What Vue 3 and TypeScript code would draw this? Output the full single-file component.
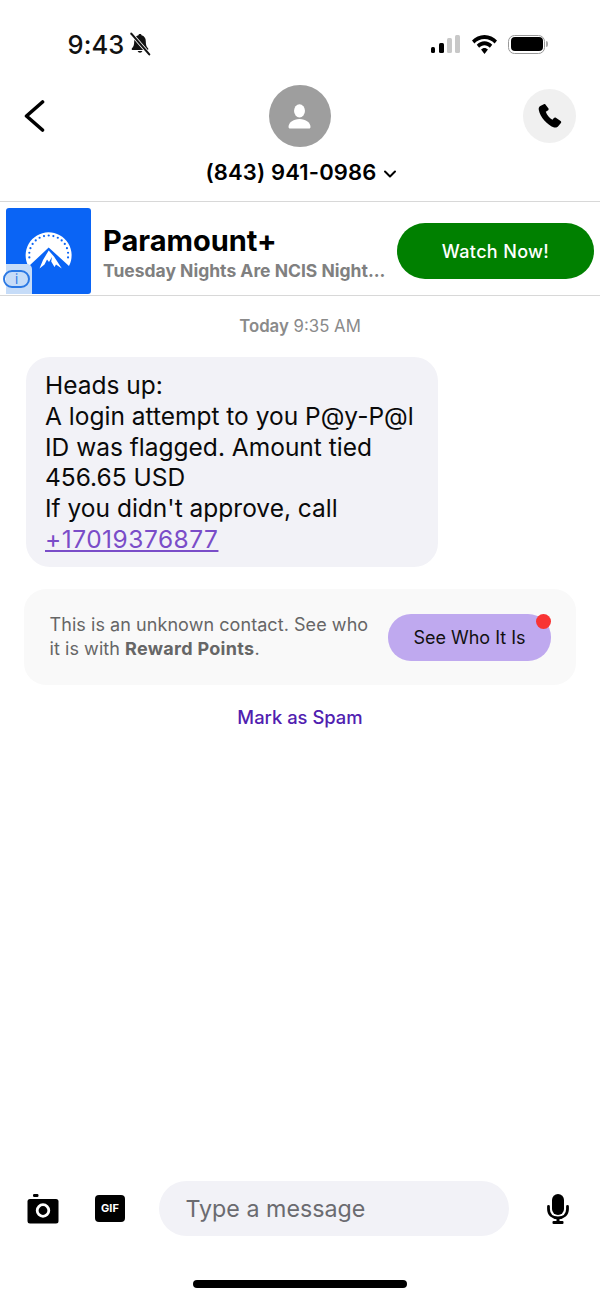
<script setup lang="ts">
const dots: { x: number; y: number }[] = [];
for (let i = 0; i <= 14; i++) {
  const a = Math.PI * (1.04 - (i / 14) * 1.08);
  dots.push({ x: 32.7 + 19.5 * Math.cos(a), y: 34 - 19.5 * Math.sin(a) });
}
const messageLines: string[] = [
  'Heads up:',
  'A login attempt to you P@y-P@l',
  'ID was flagged. Amount tied',
  '456.65 USD',
  "If you didn't approve, call",
];
</script>

<template>
  <div class="screen">
    <header class="status">
      <div class="status-left">
        <span class="time">9:43</span>
        <svg class="bell" width="24" height="24" viewBox="0 0 22 22">
          <path d="M11 1.800c-.8 0-1.300.5-1.400 1.200C7 3.600 5.700 5.800 5.700 8.400c0 3.400-.7 5.200-2.200 6.600v1.400h15V15c-1.500-1.400-2.200-3.200-2.200-6.600 0-2.600-1.300-4.800-3.900-5.400-.1-.7-.6-1.200-1.400-1.200z" fill="#111" />
          <path d="M8.800 17.500a2.300 2.300 0 0 0 4.400 0z" fill="#111" />
          <path d="M3 1.500l16.500 19" stroke="#fff" stroke-width="3.400" />
          <path d="M3 1.500l16.500 19" stroke="#111" stroke-width="1.900" stroke-linecap="round" />
        </svg>
      </div>
      <div class="status-right">
        <div class="signal">
          <i class="s1"></i><i class="s2"></i><i class="s3"></i><i class="s4"></i>
        </div>
        <svg width="25" height="19" viewBox="2 3 21 14.500" preserveAspectRatio="none">
          <path d="M12.500 3C8.400 3 4.700 4.600 2 7.200l2 2.200C6.200 7.300 9.200 6 12.500 6s6.300 1.300 8.500 3.400l2-2.200C20.300 4.600 16.600 3 12.500 3z" fill="#000" />
          <path d="M12.500 7.800c-2.500 0-4.800 1-6.500 2.600l2 2.300c1.200-1.100 2.800-1.800 4.500-1.800s3.300.7 4.500 1.800l2-2.300c-1.700-1.600-4-2.600-6.500-2.600z" fill="#000" />
          <path d="M12.500 12.900c-1.100 0-2 .4-2.900 1.200l2.900 3.400 2.900-3.400c-.9-.8-1.800-1.200-2.900-1.200z" fill="#000" />
        </svg>
        <div class="battery"><div class="battery-fill"></div></div>
        <div class="battery-cap"></div>
      </div>
    </header>

    <nav class="nav">
      <button class="back" aria-label="Back">
        <svg width="24" height="36" viewBox="0 0 24 36">
          <path d="M18.500 4L2.500 18l16 14" fill="none" stroke="#000" stroke-width="3.600" stroke-linecap="round" stroke-linejoin="round" />
        </svg>
      </button>
      <div class="contact">
        <div class="avatar">
          <svg width="23" height="25" viewBox="0 0 23 25">
            <ellipse cx="11.500" cy="6.800" rx="5.500" ry="6.600" fill="#fff" />
            <path d="M2 24.500c-1 0-1.500-.6-1.500-1.500 0-4.200 4.500-8 11-8s11 3.800 11 8c0 .9-.5 1.500-1.500 1.500z" fill="#fff" />
          </svg>
        </div>
        <div class="number">
          <span>(843) 941-0986</span>
          <svg width="14" height="10" viewBox="0 0 14 10">
            <path d="M2 2.500l5 5 5-5" fill="none" stroke="#000" stroke-width="2" stroke-linecap="round" stroke-linejoin="round" />
          </svg>
        </div>
      </div>
      <button class="call" aria-label="Call">
        <svg width="26" height="26" viewBox="0 0 26 26">
          <path d="M6.800 1.300L3.300 3C1.800 3.800 1.500 5.300 1.800 7c1 6.500 8.700 15.600 15.400 17.400 1.800.5 3.200 0 4.200-1.300l2.500-3.200c.5-.7.400-1.500-.3-2l-4.700-3.200c-.7-.5-1.500-.4-2 .2l-1.500 1.800c-3-1.500-5.700-5-6.600-8l2-1.200c.7-.4 1-1.200.7-2L8.800 2c-.3-.8-1.200-1.100-2-.7z" fill="#000" />
        </svg>
      </button>
    </nav>

    <section class="ad">
      <div class="ad-art">
        <svg width="64" height="64" viewBox="0 0 64 64" class="ad-logo">
          <path d="M12.500 45.500A23 23 0 1 1 53 45L32.700 26.500z" fill="#fff" />
          <path d="M32.700 29.500L38 35.500 45.800 47.500 40 43.500 38.500 46 35.200 40.500 36 36 33 41 31 38.500 28.500 43.500 23.500 47.500 27 39z" fill="#fff" />
          <circle v-for="(d, i) in dots" :key="i" :cx="d.x" :cy="d.y" r="1.100" fill="#0a64f5" />
        </svg>
        <div class="ad-info"><span class="ad-info-pill">i</span></div>
      </div>
      <div class="ad-text">
        <div class="ad-title">Paramount+</div>
        <div class="ad-sub">Tuesday Nights Are NCIS Night...</div>
      </div>
      <button class="ad-cta">Watch Now!</button>
    </section>

    <main class="thread">
      <div class="stamp"><b>Today</b> 9:35 AM</div>
      <div class="bubble">
        <div v-for="line in messageLines" :key="line">{{ line }}</div>
        <a class="link">+17019376877</a>
      </div>
      <div class="notice">
        <p class="notice-text">This is an unknown contact. See who it is with <b>Reward Points</b>.</p>
        <button class="who">See Who It Is<span class="dot"></span></button>
      </div>
      <a class="spam">Mark as Spam</a>
    </main>

    <footer class="composer">
      <svg class="cam" width="32" height="30" viewBox="0 0 32 30">
        <rect x="6" y="0" width="5.500" height="3" rx="1.200" fill="#000" />
        <rect x="0.500" y="5" width="31" height="24.500" rx="2.500" fill="#000" />
        <circle cx="16" cy="16.500" r="5.800" fill="none" stroke="#fff" stroke-width="2.800" />
      </svg>
      <div class="gif">GIF</div>
      <div class="input">Type a message</div>
      <svg class="mic" width="22" height="30" viewBox="0 0 22 30">
        <rect x="5" y="0" width="12" height="21" rx="6" fill="#000" />
        <path d="M1.500 12.500v2.500c0 5.500 4 8.800 9.500 8.800s9.500-3.300 9.500-8.800v-2.500" fill="none" stroke="#000" stroke-width="2.800" stroke-linecap="round" />
        <rect x="9.500" y="23" width="3" height="5" fill="#000" />
        <rect x="5.500" y="27" width="11" height="3" rx="1" fill="#000" />
      </svg>
    </footer>
    <div class="home-wrap"><div class="home"></div></div>
  </div>
</template>

<style>
html, body { margin: 0; background: #fff; }
</style>

<style scoped>
.screen {
  width: 600px;
  height: 1300px;
  display: flex;
  flex-direction: column;
  font-family: Inter, "Liberation Sans", sans-serif;
  color: #000;
  background: #fff;
  overflow: hidden;
}
button { font-family: inherit; border: 0; padding: 0; }
.status {
  height: 85px;
  flex: none;
  box-sizing: border-box;
  padding: 29px 52px 0 67.500px;
  display: flex;
  justify-content: space-between;
  align-items: flex-start;
}
.status-left { display: flex; align-items: center; gap: 4px; height: 30px; }
.time { font-size: 25.500px; font-weight: 500; letter-spacing: 0.1px; color: #111; }
.status-right { display: flex; align-items: center; height: 30px; }
.signal { display: flex; align-items: flex-end; gap: 3.500px; height: 18px; margin-right: 12px; }
.signal i { display: block; width: 4.750px; border-radius: 1.500px; background: #000; }
.signal .s1 { height: 6px; }
.signal .s2 { height: 10px; }
.signal .s3 { height: 15px; background: #c8c8c8; }
.signal .s4 { height: 18px; background: #c8c8c8; }
.battery {
  width: 37px;
  height: 19px;
  box-sizing: border-box;
  margin-left: 11px;
  border: 1.500px solid #999;
  border-radius: 6.500px;
  padding: 1.500px;
}
.battery-fill { height: 100%; background: #000; border-radius: 4px; }
.battery-cap { width: 2px; height: 6px; margin-left: 1px; background: #aaa; border-radius: 0 2px 2px 0; }
.nav {
  flex: none;
  height: 116px;
  box-sizing: border-box;
  padding: 0 24px;
  display: grid;
  grid-template-columns: 1fr auto 1fr;
  align-items: start;
}
.back { width: 24px; height: 36px; margin-top: 13px; background: none; }
.contact {
  display: flex;
  flex-direction: column;
  align-items: center;
}
.avatar {
  width: 62px;
  height: 62px;
  border-radius: 50%;
  background: #9e9e9e;
  display: flex;
  align-items: center;
  justify-content: center;
}
.number {
  margin: 13px 0 0 2px;
  display: flex;
  align-items: center;
  gap: 6px;
  font-size: 22px;
  line-height: 25px;
  font-weight: 600;
  letter-spacing: 0.15px;
  white-space: nowrap;
}
.number svg { margin-top: 3px; }
.call {
  justify-self: end;
  width: 53px;
  height: 54px;
  margin-top: 4px;
  border-radius: 50%;
  background: #f0f0f0;
  display: flex;
  align-items: center;
  justify-content: center;
}
.ad {
  flex: none;
  height: 95px;
  box-sizing: border-box;
  border-top: 1px solid #d8d8d8;
  border-bottom: 1px solid #d8d8d8;
  padding: 6px 6px 0;
  display: flex;
  align-items: flex-start;
}
.ad-art {
  width: 85px;
  height: 86px;
  flex: none;
  border-radius: 3px;
  background: #0a64f5;
  position: relative;
}
.ad-logo { position: absolute; left: 10px; top: 13px; }
.ad-info {
  position: absolute;
  left: 0;
  bottom: 0;
  width: 26px;
  height: 30px;
  border-radius: 0 5px 0 0;
  background: #c6dcf8;
}
.ad-info-pill {
  position: absolute;
  left: -3px;
  top: 6px;
  box-sizing: border-box;
  width: 27px;
  height: 18px;
  border: 2px solid #2a78e4;
  border-radius: 9px;
  font-size: 13px;
  line-height: 14px;
  text-align: center;
  color: #2a78e4;
}
.ad-text { width: 294px; margin-left: 12px; flex: none; }
.ad-title { margin-top: 15px; font-size: 29px; line-height: 36px; font-weight: 700; white-space: nowrap; }
.ad-sub { margin-top: 0; font-size: 17.500px; line-height: 24px; font-weight: 700; color: #808080; white-space: nowrap; }
.ad-cta {
  width: 197px;
  height: 56px;
  margin-top: 15px;
  flex: none;
  border-radius: 28px;
  background: #008000;
  color: #fff;
  font-size: 18px;
  font-weight: 500;
  letter-spacing: 0.35px;
}
.thread {
  flex: 1;
  min-height: 0;
  display: flex;
  flex-direction: column;
}
.stamp {
  margin-top: 20px;
  text-align: center;
  font-size: 16.800px;
  line-height: 20px;
  color: #8a8a8a;
}
.stamp b { font-weight: 600; }
.bubble {
  width: 412px;
  height: 210px;
  box-sizing: border-box;
  margin: 21px 0 0 26px;
  padding: 13px 12px 0 19px;
  border-radius: 24px;
  background: #f2f2f7;
  font-size: 24.500px;
  line-height: 30.800px;
  white-space: nowrap;
  color: #0a0a0a;
}
.link { color: #7a4dc8; letter-spacing: 0.5px; text-decoration: underline; text-underline-offset: 2px; text-decoration-thickness: 1.500px; }
.notice {
  width: 552px;
  height: 96px;
  box-sizing: border-box;
  margin: 22px 0 0 24px;
  padding: 0 25px 0 25.500px;
  border-radius: 22px;
  background: #f9f9f9;
  display: flex;
  align-items: center;
  justify-content: space-between;
}
.notice-text {
  margin: 0;
  width: 322px;
  font-size: 18px;
  line-height: 24px;
  letter-spacing: 0.06px;
  color: #666;
}
.notice-text b { font-weight: 700; letter-spacing: 0.3px; }
.who {
  position: relative;
  width: 163px;
  height: 47px;
  flex: none;
  border-radius: 23px;
  background: #bfa9ef;
  color: #111;
  font-size: 18px;
}
.dot {
  position: absolute;
  right: 0;
  top: 0;
  width: 15px;
  height: 15px;
  border-radius: 50%;
  background: #f93434;
}
.spam {
  margin-top: 21px;
  text-align: center;
  font-size: 18.400px;
  line-height: 22px;
  font-weight: 500;
  color: #5020b0;
}
.composer {
  flex: none;
  height: 55px;
  padding-left: 27px;
  display: flex;
  align-items: center;
}
.gif {
  width: 30px;
  height: 27px;
  margin-left: 36px;
  border-radius: 4px;
  background: #000;
  color: #fff;
  font-size: 11px;
  font-weight: 700;
  line-height: 27px;
  text-align: center;
}
.input {
  width: 350px;
  height: 55px;
  box-sizing: border-box;
  margin-left: 33.500px;
  padding-left: 27px;
  border-radius: 27.500px;
  background: #f2f2f7;
  color: #6b6b70;
  font-size: 23.250px;
  line-height: 56px;
}
.mic { margin-left: 38.500px; }
.home-wrap { flex: none; height: 64px; box-sizing: border-box; padding-top: 44px; }
.home { width: 214px; height: 8px; margin: 0 auto; border-radius: 4px; background: #000; }
</style>
